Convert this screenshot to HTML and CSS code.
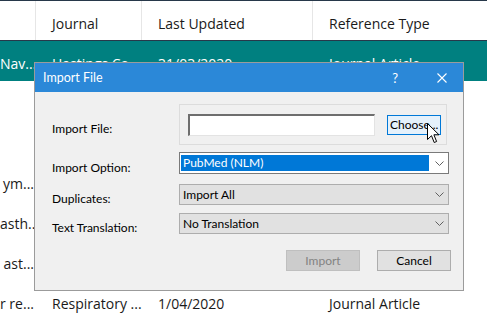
FILE: index.html
```html
<!DOCTYPE html>
<html lang="en">
<head>
  <meta charset="UTF-8" />
  <title>Import File</title>
  <link rel="stylesheet" href="styles.css">
</head>
<body>
  <div class="list">
    <div class="row head">
      <div class="cell first"></div>
      <div class="cell">Journal</div>
      <div class="cell">Last Updated</div>
      <div class="cell">Reference Type</div>
    </div>
    <div class="row selected">
      <div class="cell first">Nav...</div>
      <div class="cell">Hastings Co...</div>
      <div class="cell">31/03/2020</div>
      <div class="cell">Journal Article</div>
    </div>
    <div class="row"><div class="cell first"></div><div class="cell"></div><div class="cell"></div><div class="cell"></div></div>
    <div class="row"><div class="cell first"></div><div class="cell"></div><div class="cell"></div><div class="cell"></div></div>
    <div class="row"><div class="cell first">ym...</div><div class="cell"></div><div class="cell"></div><div class="cell"></div></div>
    <div class="row"><div class="cell first">asth...</div><div class="cell"></div><div class="cell"></div><div class="cell"></div></div>
    <div class="row"><div class="cell first">ast...</div><div class="cell"></div><div class="cell"></div><div class="cell"></div></div>
    <div class="row">
      <div class="cell first">r re...</div>
      <div class="cell">Respiratory ...</div>
      <div class="cell">1/04/2020</div>
      <div class="cell">Journal Article</div>
    </div>
  </div>

  <div class="dialog">
    <div class="titlebar">
      <span class="title">Import File</span>
      <span class="help">?</span>
      <svg class="close" width="10" height="10" viewBox="0 0 10 10">
        <path d="M0.5 0.5 L9.5 9.5 M9.5 0.5 L0.5 9.5" stroke="#fff" stroke-width="1.1" fill="none"/>
      </svg>
    </div>
    <div class="body">
      <div class="field field-file">
        <label>Import File:</label>
        <div class="groupbox">
          <div class="filebox"></div>
          <button class="choose">Choose...</button>
          <svg class="cursor" width="13" height="21" viewBox="0 0 13 21">
            <path d="M0.5 0.5 L0.5 16.5 L4.5 12.7 L7.2 19.5 L9.6 18.5 L6.9 11.8 L12 11.8 Z" fill="#fff" stroke="#000" stroke-width="1"/>
          </svg>
        </div>
      </div>
      <div class="field field-option">
        <label>Import Option:</label>
        <div class="combo active">
          <span class="value">PubMed (NLM)</span>
          <svg class="chev" width="9" height="5" viewBox="0 0 9 5"><path d="M0.5 0.5 L4.5 4.5 L8.5 0.5" stroke="#606060" fill="none"/></svg>
        </div>
      </div>
      <div class="field field-dup">
        <label>Duplicates:</label>
        <div class="combo">
          <span class="value">Import All</span>
          <svg class="chev" width="9" height="5" viewBox="0 0 9 5"><path d="M0.5 0.5 L4.5 4.5 L8.5 0.5" stroke="#606060" fill="none"/></svg>
        </div>
      </div>
      <div class="field field-trans">
        <label>Text Translation:</label>
        <div class="combo">
          <span class="value">No Translation</span>
          <svg class="chev" width="9" height="5" viewBox="0 0 9 5"><path d="M0.5 0.5 L4.5 4.5 L8.5 0.5" stroke="#606060" fill="none"/></svg>
        </div>
      </div>
      <div class="actions">
        <button class="btn disabled">Import</button>
        <button class="btn">Cancel</button>
      </div>
    </div>
  </div>
</body>
</html>
```

FILE: styles.css
```css
body {
  margin: 0;
  background: #fff;
  font-family: "Open Sans", "Noto Sans", sans-serif;
  overflow: hidden;
}
.list {
  width: 487px;
}
.row {
  display: grid;
  grid-template-columns: 36px 106px 171px 174px;
  height: 40px;
  font-size: 14px;
  color: #1a1a1a;
}
.row.head {
  height: 39px;
  border-top: 1px solid #27384a;
  border-bottom: 1px solid #27384a;
}
.row.head .cell {
  border-right: 1px solid #e6e6e6;
}
.row.head .cell:last-child {
  border-right: none;
}
.row.selected {
  background: #008080;
  color: #fff;
}
.cell {
  line-height: 40px;
  padding-top: 3px;
  padding-left: 16px;
  white-space: nowrap;
  overflow: hidden;
}
.row.head .cell {
  line-height: 39px;
}
.cell.first {
  padding-left: 0;
  padding-right: 2px;
  text-align: right;
}
.row.head .cell.first {
  padding-right: 0;
}

.dialog {
  position: absolute;
  left: 34px;
  top: 62px;
  width: 428px;
  height: 227px;
  border: 1px solid #9b9b9b;
  background: #f0f0f0;
  font-family: "Lato", "Open Sans", sans-serif;
  font-size: 12px;
  color: #000;
}
.titlebar {
  height: 29px;
  background: #2b88d8;
  color: #fff;
  display: flex;
  align-items: center;
  padding-left: 8px;
  font-size: 12.5px;
}
.title {
  flex: 1;
}
.help {
  font-size: 13px;
  margin-right: 39px;
}
.close {
  margin-right: 16px;
}
.body {
  padding: 12px 0 0 17px;
  display: flex;
  flex-direction: column;
}
.field {
  display: flex;
  align-items: center;
  height: 21px;
}
.field label {
  width: 127px;
  padding-top: 8px;
  white-space: nowrap;
}
.field-file { height: 41px; }
.field-option { margin-top: 7px; height: 22px; }
.field-dup { margin-top: 10px; }
.field-trans { margin-top: 8px; }

.groupbox {
  position: relative;
  box-sizing: border-box;
  width: 268px;
  height: 41px;
  border: 1px solid #dcdcdc;
  display: flex;
  align-items: center;
  padding-left: 8px;
}
.filebox {
  box-sizing: border-box;
  width: 187px;
  height: 22px;
  background: #fff;
  border-top: 2px solid #6e6e6e;
  border-left: 2px solid #6e6e6e;
  border-right: 1px solid #e3e3e3;
  border-bottom: 1px solid #e3e3e3;
}
.choose {
  box-sizing: border-box;
  margin-left: 12px;
  width: 54px;
  height: 20px;
  padding: 0 0 0 2px;
  border: 1px solid #0078d7;
  background: #e5f1fb;
  font: inherit;
  color: #000;
  white-space: nowrap;
  overflow: hidden;
  text-align: left;
}
.cursor {
  position: absolute;
  left: 247px;
  top: 18px;
}

.combo {
  box-sizing: border-box;
  width: 270px;
  height: 21px;
  border: 1px solid #adadad;
  background: #e1e1e1;
  display: flex;
  align-items: center;
  padding-left: 3px;
  padding-right: 4px;
}
.combo .chev {
  flex: none;
}
.combo.active {
  height: 22px;
  border-color: #7a7a7a;
  background: #fff;
  padding-left: 1px;
}
.combo .value {
  flex: 1;
  white-space: nowrap;
}
.combo.active .value {
  flex: none;
  box-sizing: border-box;
  width: 248px;
  height: 16px;
  line-height: 16px;
  background: #0078d7;
  color: #fff;
  padding-left: 2px;
  margin-right: 6px;
}
.actions {
  display: flex;
  justify-content: flex-end;
  gap: 17px;
  margin-top: 16px;
  padding-right: 12px;
}
.btn {
  box-sizing: border-box;
  width: 74px;
  height: 21px;
  border: 1px solid #adadad;
  background: #e1e1e1;
  font: inherit;
  color: #000;
  padding: 0;
}
.btn.disabled {
  background: #cccccc;
  border-color: #bfbfbf;
  color: #838383;
}
```
